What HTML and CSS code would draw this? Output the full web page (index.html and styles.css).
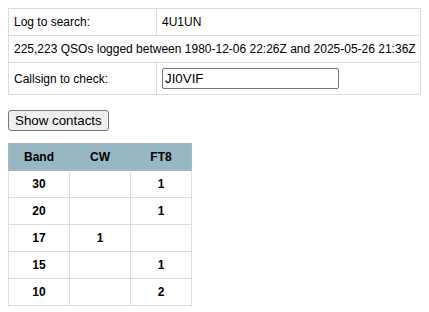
FILE: index.html
```html
<!DOCTYPE html>
<html lang="en">

<head>
    <meta charset="UTF-8">
    <meta name="viewport" content="width=device-width, initial-scale=1.0">
    <title>Log search</title>
    <link rel="stylesheet" href="styles.css">
</head>

<body>
    <form class="log-form">
        <table class="log-info">
            <tr>
                <td class="label-cell">Log to search:</td>
                <td>4U1UN</td>
            </tr>
            <tr>
                <td colspan="2" class="summary">225,223 QSOs logged between 1980-12-06 22:26Z and 2025-05-26 21:36Z</td>
            </tr>
            <tr>
                <td class="label-cell">Callsign to check:</td>
                <td class="input-cell"><input type="text" class="call-input" value="JI0VIF"></td>
            </tr>
        </table>

        <div class="form-actions">
            <button type="button" class="show-btn">Show contacts</button>
        </div>
    </form>

    <!-- Результаты по диапазонам -->
    <table class="band-table">
        <thead>
            <tr>
                <th>Band</th>
                <th>CW</th>
                <th>FT8</th>
            </tr>
        </thead>
        <tbody>
            <tr>
                <td class="band">30</td>
                <td></td>
                <td class="qso">1</td>
            </tr>
            <tr>
                <td class="band">20</td>
                <td></td>
                <td class="qso">1</td>
            </tr>
            <tr>
                <td class="band">17</td>
                <td class="qso">1</td>
                <td></td>
            </tr>
            <tr>
                <td class="band">15</td>
                <td></td>
                <td class="qso">1</td>
            </tr>
            <tr>
                <td class="band">10</td>
                <td></td>
                <td class="qso">2</td>
            </tr>
        </tbody>
    </table>
</body>

</html>
```

FILE: styles.css
```css
body {
    margin: 8px;
    font-family: "Liberation Sans", Arial, sans-serif;
    font-size: 12px;
    color: #000;
    background: #fff;
}

.log-form {
    margin: 0;
}

.log-info {
    border-collapse: collapse;
    table-layout: fixed;
    width: 413px;
}

.log-info td {
    border: 1px solid #ddd;
    padding: 6px 5px;
    text-align: left;
    white-space: nowrap;
}

.log-info .label-cell {
    width: 137px;
}

.log-info .input-cell {
    padding: 5px;
}

.call-input {
    display: block;
    box-sizing: border-box;
    width: 177px;
    height: 21px;
    margin: 0;
    padding: 1px 2px;
    border: 1px solid #767676;
    border-radius: 2px;
    font-family: "Liberation Sans", Arial, sans-serif;
    font-size: 13.33px;
}

.form-actions {
    margin: 15px 0 12px;
}

.show-btn {
    display: block;
    height: 21px;
    padding: 1px 6px;
    font-family: "Liberation Sans", Arial, sans-serif;
    font-size: 13.33px;
    background: #efefef;
    border: 1px solid #767676;
    border-radius: 3px;
    color: #000;
}

/* Таблица диапазонов */

.band-table {
    border-collapse: collapse;
    text-align: center;
}

.band-table th {
    width: 48px;
    padding: 6px;
    background: #98b7c4;
    border: 1px solid #aab8bd;
    font-weight: bold;
}

.band-table td {
    width: 48px;
    padding: 6px;
    border: 1px solid #ddd;
    font-weight: bold;
}
```
